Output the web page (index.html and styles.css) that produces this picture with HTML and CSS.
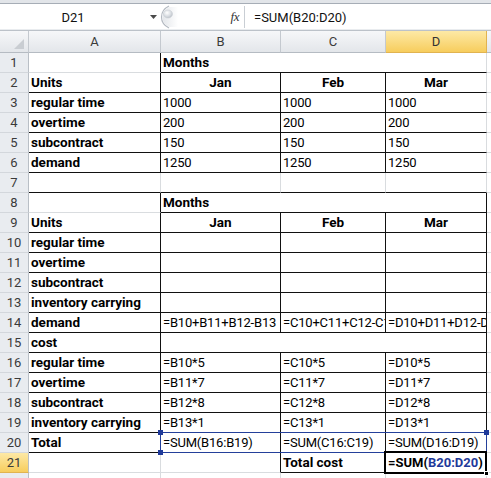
FILE: index.html
```html
<!DOCTYPE html>
<html>
<head>
<meta charset="utf-8">
<link rel="stylesheet" href="styles.css">
</head>
<body>
<div class="app">
  <div class="topband"></div>
  <div class="fbar">
    <div class="namebox">D21</div>
    <div class="dd"><svg width="7" height="4" viewBox="0 0 7 4"><path d="M0 0h7L3.5 4z" fill="#4a4a4a"/></svg></div>
    <div class="grip"><svg width="18" height="24" viewBox="0 0 18 24"><defs><radialGradient id="g" cx="0.4" cy="0.35" r="0.7"><stop offset="0" stop-color="#ffffff"/><stop offset="0.6" stop-color="#d9dde2"/><stop offset="1" stop-color="#b8bec6"/></radialGradient><linearGradient id="h" x1="0" x2="1"><stop offset="0" stop-color="#e3e6ea"/><stop offset="1" stop-color="#ffffff"/></linearGradient></defs><path d="M9 1 C3 4 1.5 8 1.5 12 C1.5 16 3 20 9 23" fill="none" stroke="#b3b9c1" stroke-width="1.2"/><path d="M9 2 C4 5 2.5 8 2.5 12 C2.5 16 4 19 9 22 L18 22 L18 2z" fill="url(#h)"/><ellipse cx="8" cy="9" rx="4.5" ry="4" fill="url(#g)" stroke="#c9ced4" stroke-width="0.6"/></svg></div>
    <div class="fxwrap"><span class="fx">fx</span></div>
    <div class="ftext">=SUM(B20:D20)</div>
  </div>
  <div class="sheet">
    <div class="ch corner"><svg width="10" height="10" viewBox="0 0 10 10"><path d="M10 0V10H0z" fill="#c9cdd2"/></svg></div>
    <div class="ch">A</div><div class="ch">B</div><div class="ch">C</div><div class="ch sel">D</div><div class="ch e"></div>

    <div class="rh">1</div><div class="c R"></div><div class="c s3 B bold">Months</div><div class="c e"></div>
    <div class="rh">2</div><div class="c R B bold">Units</div><div class="c R B bold ctr">Jan</div><div class="c R B bold ctr">Feb</div><div class="c B bold ctr">Mar</div><div class="c e"></div>
    <div class="rh">3</div><div class="c R B bold">regular time</div><div class="c R B">1000</div><div class="c R B">1000</div><div class="c B">1000</div><div class="c e"></div>
    <div class="rh">4</div><div class="c R B bold">overtime</div><div class="c R B">200</div><div class="c R B">200</div><div class="c B">200</div><div class="c e"></div>
    <div class="rh">5</div><div class="c R B bold">subcontract</div><div class="c R B">150</div><div class="c R B">150</div><div class="c B">150</div><div class="c e"></div>
    <div class="rh">6</div><div class="c R B bold">demand</div><div class="c R B">1250</div><div class="c R B">1250</div><div class="c B">1250</div><div class="c e"></div>
    <div class="rh">7</div><div class="c B"></div><div class="c B"></div><div class="c B"></div><div class="c B"></div><div class="c e"></div>

    <div class="rh">8</div><div class="c R"></div><div class="c s3 R B bold">Months</div><div class="c e"></div>
    <div class="rh">9</div><div class="c R B bold">Units</div><div class="c R B bold ctr">Jan</div><div class="c R B bold ctr">Feb</div><div class="c R B bold ctr">Mar</div><div class="c e"></div>
    <div class="rh">10</div><div class="c R B bold">regular time</div><div class="c R B"></div><div class="c R B"></div><div class="c R B"></div><div class="c e"></div>
    <div class="rh">11</div><div class="c R B bold">overtime</div><div class="c R B"></div><div class="c R B"></div><div class="c R B"></div><div class="c e"></div>
    <div class="rh">12</div><div class="c R B bold">subcontract</div><div class="c R B"></div><div class="c R B"></div><div class="c R B"></div><div class="c e"></div>
    <div class="rh">13</div><div class="c R B bold">inventory carrying</div><div class="c R B"></div><div class="c R B"></div><div class="c R B"></div><div class="c e"></div>
    <div class="rh">14</div><div class="c R B bold">demand</div><div class="c R B">=B10+B11+B12-B13</div><div class="c R B">=C10+C11+C12-C13</div><div class="c R B">=D10+D11+D12-D13</div><div class="c e"></div>
    <div class="rh">15</div><div class="c R B bold">cost</div><div class="c s3 R B"></div><div class="c e"></div>
    <div class="rh">16</div><div class="c R B bold">regular time</div><div class="c R B">=B10*5</div><div class="c R B">=C10*5</div><div class="c R B">=D10*5</div><div class="c e"></div>
    <div class="rh">17</div><div class="c R B bold">overtime</div><div class="c R B">=B11*7</div><div class="c R B">=C11*7</div><div class="c R B">=D11*7</div><div class="c e"></div>
    <div class="rh">18</div><div class="c R B bold">subcontract</div><div class="c R B">=B12*8</div><div class="c R B">=C12*8</div><div class="c R B">=D12*8</div><div class="c e"></div>
    <div class="rh">19</div><div class="c R B bold">inventory carrying</div><div class="c R B">=B13*1</div><div class="c R B">=C13*1</div><div class="c R B">=D13*1</div><div class="c e"></div>

    <div class="rh r20 k1">20</div><div class="c R B bold r20 k2">Total</div><div class="c R B r20 k3">=SUM(B16:B19)</div><div class="c R B r20 k4">=SUM(C16:C19)</div><div class="c R B r20 k5">=SUM(D16:D19)</div><div class="c e r20 k6"></div>
    <div class="rh sel r21 k1">21</div><div class="c r21 k2"></div><div class="c R r21 k3"></div><div class="c R B bold r21 k4">Total cost</div><div class="c B bold vis r21 k5">=SUM(<span class="ref">B20:D20</span>)</div><div class="c e r21 k6"></div>

    <div class="rh">22</div><div class="c"></div><div class="c"></div><div class="c"></div><div class="c"></div><div class="c e"></div>

    <div class="range"><i class="h tl"></i><i class="h tr"></i><i class="h bl"></i></div>
    <div class="active"><i class="fill"></i></div>
  </div>
</div>
</body>
</html>
```

FILE: styles.css
```css
* { box-sizing: border-box; }
html, body { margin: 0; padding: 0; background: #fff; }
body { font-family: Roboto, "Liberation Sans", sans-serif; font-size: 13px; color: #000; }
.app { width: 491px; height: 478px; overflow: hidden; }

.topband { height: 4px; background: #e2e5e9; border-bottom: 1px solid #a6adb6; }
.fbar {
  height: 27px; display: flex; align-items: center; background: #fff;
  border-bottom: 1px solid #bcc2c9; box-shadow: inset 0 -1px 0 #e9ecef;
}
.namebox { width: 146px; text-align: center; font-size: 13px; color: #111; }
.dd { width: 14px; display: flex; justify-content: center; align-items: center; }
.grip { width: 18px; height: 24px; display: flex; }
.fxwrap {
  width: 67px; height: 22px; display: flex; justify-content: flex-end; align-items: center;
  padding-right: 5px; border-right: 1px solid #c9ced4;
}
.fx { font-family: "Liberation Serif", serif; font-style: italic; font-size: 13px; color: #333; letter-spacing: -0.5px; }
.ftext { padding-left: 9px; font-size: 13px; color: #111; }

.sheet {
  display: grid;
  grid-template-columns: 29px 132px 120px 105px 101px 4px;
  grid-template-rows: 22px repeat(22, 20px);
  position: relative;
}
.r20 { grid-row: 21; }
.r21 { grid-row: 22; }
.k1 { grid-column: 1; }
.k2 { grid-column: 2; }
.k3 { grid-column: 3; }
.k4 { grid-column: 4; }
.k5 { grid-column: 5; }
.k6 { grid-column: 6; }

.ch {
  background: linear-gradient(#f6f7f9, #e3e6ea);
  border-right: 1px solid #c4c9cf; border-bottom: 1px solid #b5bbc2;
  display: flex; align-items: center; justify-content: center;
  color: #3a3a3a; font-size: 13px;
}
.ch.corner { justify-content: flex-end; align-items: flex-end; padding: 0 4px 3px 0; }
.ch.sel { background: linear-gradient(#fde9a6, #f7cd5d); border-color: #e1b350; color: #333; }
.ch.e { border-right: none; }
.rh {
  background: #e9ecf0; border-right: 1px solid #b9bfc6; border-bottom: 1px solid #d3d7dc;
  display: flex; align-items: center; justify-content: center; color: #3a3a3a; font-size: 13px;
}
.rh.sel { background: linear-gradient(#fde9a6, #f7cd5d); border-bottom-color: #e1b350; }

.c {
  border-right: 1px solid #d9dcdf; border-bottom: 1px solid #d9dcdf;
  display: flex; align-items: flex-end; padding: 0 2px 1px 2px;
  white-space: nowrap; overflow: hidden; line-height: 17px; letter-spacing: -0.2px;
}
.c.e { border-right: none; padding: 0; }
.c.R { border-right-color: #111; }
.c.B { border-bottom-color: #111; }
.c.s3 { grid-column: span 3; }
.c.bold { font-weight: 700; font-size: 13.5px; letter-spacing: 0; }
.c.ctr { justify-content: center; }
.c.vis { overflow: visible; position: relative; z-index: 3; font-size: 13px; }
.ref { color: #1f3a9a; }

.range {
  grid-row: 21; grid-column: 3 / 6; margin: -1px 0 0 -1px;
  border: 1px solid #24409a; position: relative; z-index: 2; pointer-events: none;
}
.h { position: absolute; width: 5px; height: 5px; background: #1f3a9a; }
.h.tl { left: -3px; top: -3px; }
.h.tr { right: -3px; top: -3px; }
.h.bl { left: -3px; bottom: -3px; }
.active {
  grid-row: 22; grid-column: 5; margin: -2px 0 -1px -2px;
  border: 2px solid #000; position: relative; z-index: 4; pointer-events: none;
}
.fill { position: absolute; right: -4px; bottom: -4px; width: 5px; height: 5px; background: #000; border: 1px solid #fff; }
```
